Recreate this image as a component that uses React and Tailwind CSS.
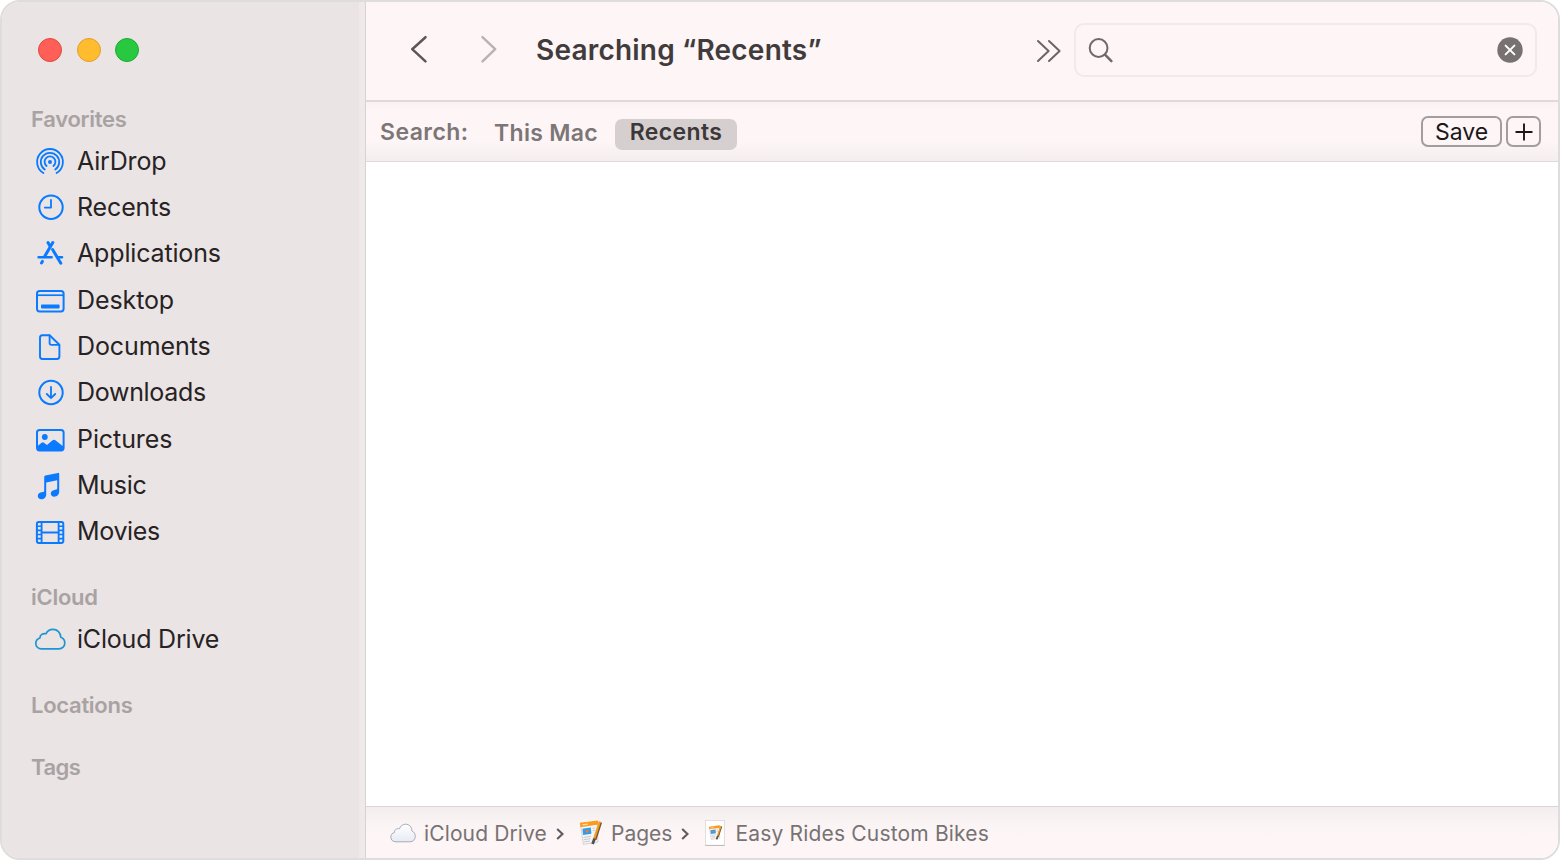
const Svg = ({ children, className = "" }) => (
  <svg viewBox="0 0 32 32" className={"h-8 w-8 shrink-0 " + className} fill="none" stroke="currentColor" strokeWidth="2" strokeLinecap="round" strokeLinejoin="round">
    {children}
  </svg>
);

const AirDropIcon = () => (
  <Svg>
    <g strokeWidth="1.8">
      <path d="M9.4 28A12.9 12.9 0 1 1 22.6 28" />
      <path d="M10.8 24.6A9.2 9.2 0 1 1 21.2 24.6" />
      <path d="M12.6 21A5.4 5.4 0 1 1 19.4 21" />
    </g>
    <circle cx="16" cy="17" r="2" fill="currentColor" stroke="none" />
  </Svg>
);
const RecentsIcon = () => (
  <Svg>
    <circle cx="17" cy="16.3" r="11.7" />
    <path d="M17 8.8V16.6H10.8" strokeWidth="1.8" />
  </Svg>
);
const AppsIcon = () => (
  <Svg>
    <g strokeWidth="3" strokeLinecap="round">
      <path d="M18.8 5.6L10.6 19.6" />
      <path d="M14 5.6L16 8.9" />
      <path d="M18.6 12.6L26.8 26.2" />
      <path d="M8.4 24.4L7.5 25.9" />
      <path d="M4.6 20.3H17.6M24 20.3H28" strokeWidth="2.6" />
    </g>
  </Svg>
);
const DesktopIcon = () => (
  <Svg>
    <rect x="3" y="7" width="26.6" height="20.4" rx="2.6" />
    <path d="M3 11.2H29.5" strokeWidth="1.7" strokeLinecap="butt" />
    <rect x="7" y="20.6" width="18.6" height="3.8" rx="0.8" fill="currentColor" stroke="none" />
  </Svg>
);
const DocumentIcon = () => (
  <Svg>
    <path d="M8.2 5.2H15.6L25.4 14.8V26.6A2.4 2.4 0 0 1 23 29H8.4A2.4 2.4 0 0 1 6 26.6V7.6A2.4 2.4 0 0 1 8.2 5.2Z" strokeWidth="1.9" />
    <path d="M15.6 5.4V13A1.8 1.8 0 0 0 17.4 14.8H25" strokeWidth="1.8" />
  </Svg>
);
const DownloadIcon = () => (
  <Svg>
    <circle cx="17" cy="16.5" r="11.7" />
    <path d="M17 10.8V22M12.8 18L17 22.2L21.2 18" strokeWidth="1.8" />
  </Svg>
);
const PicturesIcon = () => (
  <Svg>
    <rect x="3" y="7" width="26.6" height="20.4" rx="2.6" />
    <circle cx="10.8" cy="14" r="2.9" fill="currentColor" stroke="none" />
    <path d="M3 23.5L7.6 19.8Q9 18.9 10.2 19.9L13 22L18.6 17.2Q20 16.2 21.4 17.2L29.6 23.8V25.4A2 2 0 0 1 27.6 27.4H5A2 2 0 0 1 3 25.4Z" fill="currentColor" stroke="none" />
  </Svg>
);
const MusicIcon = () => (
  <Svg>
    <path d="M10.2 8Q10.2 6.9 11.3 6.6L24 3.9Q25.2 3.7 25.2 4.9V22.8C25.2 25.8 22.9 27.7 20.2 27.7C18.1 27.7 16.8 26.6 16.8 24.6C16.8 22.6 18.2 21.4 20.4 20.9L22.3 20.5Q23.2 20.3 23.2 19.2V11.2L12.2 13.5V25.4C12.2 28.3 10 30.2 7.4 30.2C5.1 30.2 3.8 28.9 3.8 27C3.8 25 5.2 23.8 7.4 23.3L9.2 22.9Q10.2 22.7 10.2 21.6Z" fill="currentColor" stroke="none" />
  </Svg>
);
const MoviesIcon = () => (
  <Svg>
    <rect x="2.9" y="7.1" width="26.4" height="20.8" rx="1.8" />
    <path d="M7.6 7.2V27.8M24.6 7.2V27.8" strokeWidth="1.8" strokeLinecap="butt" />
    <path d="M7.6 17.5H24.6" strokeWidth="1.9" />
    <path d="M3 11.3H7.6M3 15.4H7.6M3 19.5H7.6M3 23.6H7.6M24.6 11.3H29M24.6 15.4H29M24.6 19.5H29M24.6 23.6H29" strokeWidth="1.6" strokeLinecap="butt" />
  </Svg>
);
const CloudIcon = () => (
  <Svg className="text-[#1d96d2]">
    <path d="M7.4 25.9C4 25.9 1.8 23.4 1.8 20.4C1.8 17.8 3.3 15.8 5.9 15C5.9 11.9 9 9.8 11.9 10.8C13.3 8 15.8 6.4 19 6.4C23.4 6.4 26.6 9.6 26.8 14.2C29.2 15.1 30.8 17.3 30.8 20C30.8 23.3 28.3 25.9 24.9 25.9Z" strokeWidth="1.7" />
  </Svg>
);

const favorites = [
  ["AirDrop", AirDropIcon, "tracking-[-0.18px]"],
  ["Recents", RecentsIcon, "tracking-[-0.15px]"],
  ["Applications", AppsIcon, "tracking-[-0.16px]"],
  ["Desktop", DesktopIcon, "tracking-[-0.1px]"],
  ["Documents", DocumentIcon, "tracking-[-0.1px]"],
  ["Downloads", DownloadIcon, "tracking-[-0.3px]"],
  ["Pictures", PicturesIcon, "tracking-[-0.08px]"],
  ["Music", MusicIcon, "tracking-[-0.3px]"],
  ["Movies", MoviesIcon, "tracking-[-0.35px]"],
];

const Row = ({ label, Icon, tracking }) => (
  <li className="flex h-[46.3px] items-center gap-[11px] pl-8 text-[#0a7bff]">
    <Icon />
    <span className={"whitespace-nowrap text-[25px] leading-8 text-[#272223] " + tracking}>{label}</span>
  </li>
);

const Heading = ({ children, className }) => (
  <h2 className={"h-7 pl-[29px] text-[22px] font-semibold leading-7 text-[#a9a2a3] " + className}>{children}</h2>
);

const Sidebar = () => (
  <aside className="w-[364px] shrink-0 border-r border-[#d9d1d3] bg-[#efe9ea] pr-[6px]">
    <div className="h-full bg-[#eae4e4] pt-9">
      <div className="flex h-6 gap-[14.5px] pl-9">
        <span className="h-6 w-6 rounded-full border border-[#e2483f] bg-[#ff5f57]" />
        <span className="h-6 w-6 rounded-full border border-[#e0a02a] bg-[#febc2e]" />
        <span className="h-6 w-6 rounded-full border border-[#1dad2f] bg-[#28c840]" />
      </div>
      <Heading className="mt-[43px] tracking-[-0.28px]">Favorites</Heading>
      <ul className="mt-[4.6px]">
        {favorites.map(([label, Icon, tracking]) => (
          <Row key={label} label={label} Icon={Icon} tracking={tracking} />
        ))}
      </ul>
      <Heading className="mt-[28.7px] tracking-[-0.25px]">iCloud</Heading>
      <ul className="mt-[5.3px]">
        <Row label="iCloud Drive" Icon={CloudIcon} tracking="tracking-[-0.2px]" />
      </ul>
      <Heading className="mt-[28.4px] tracking-[-0.28px]">Locations</Heading>
      <Heading className="mt-[34px] tracking-[-0.5px]">Tags</Heading>
    </div>
  </aside>
);

const PagesArt = () => (
  <>
    <path d="M1.4 4L18 1.6L19 22L4.4 24.4Z" fill="#f4f4f5" stroke="#c6c6c8" strokeWidth="0.7" />
    <path d="M0.8 2.8L19 0.4L19.3 4.6L1.5 7.2Z" fill="#fb9a1d" />
    <path d="M3.4 4.9L9 4.1" stroke="#ffe0b0" strokeWidth="1.2" />
    <path d="M3.4 8.8L11.8 7.6L12.4 13.8L4.1 15Z" fill="#2f9bef" />
    <path d="M5.6 10.4L10.2 9.8L8.4 13.2Z" fill="#ee7a2c" />
    <path d="M13.6 8.4L16 8M13.8 10.6L16 10.3M4.6 17.4L12 16.4M4.8 19.6L11.5 18.7M5.2 21.8L11 21" stroke="#c4c4c6" strokeWidth="0.9" />
    <path d="M21.6 2.2L16 19.6" stroke="#6e5236" strokeWidth="3" />
    <path d="M20.9 1.6L15 19.4" stroke="#f79a1e" strokeWidth="2.2" />
    <path d="M15.6 18.6L13.6 24" stroke="#55504f" strokeWidth="2.8" />
  </>
);

const Chevron = () => (
  <svg viewBox="0 0 8 12" className="mt-0.5 h-3 w-2 shrink-0" fill="none" stroke="#5f5a5b" strokeWidth="2.1">
    <path d="M1.2 1L6.5 6L1.2 11" />
  </svg>
);

const PathBar = () => (
  <footer className="flex h-[52px] shrink-0 items-center border-t border-[#dcd5d6] bg-[linear-gradient(#f4eded,#fbf4f4_35%,#fdf5f6_60%)] pl-6 text-[21px] text-[#777273]">
    <svg viewBox="0 0 26 20" className="h-5 w-[26px] shrink-0">
      <defs>
        <linearGradient id="cloud" x1="0" y1="0" x2="0" y2="1">
          <stop offset="0" stopColor="#ffffff" />
          <stop offset="1" stopColor="#e6ebf3" />
        </linearGradient>
      </defs>
      <path d="M6 18.8C2.8 18.8 0.8 16.8 0.8 14.1C0.8 11.8 2.2 10.1 4.3 9.6C4.3 6.8 6.9 5 9.4 5.8C10.5 3 12.6 1.2 15.6 1.2C19.2 1.2 21.9 4 21.9 7.9C24 8.8 25.3 10.9 25.3 13.3C25.3 16.4 23.2 18.8 20 18.8Z" fill="url(#cloud)" stroke="#a9abb5" strokeWidth="1" />
    </svg>
    <span className="ml-2 mt-0.5 whitespace-nowrap tracking-[0.13px]">iCloud Drive</span>
    <span className="ml-[9px] flex"><Chevron /></span>
    <svg viewBox="0 0 23 26" className="ml-[15px] h-[26px] w-[23px] shrink-0"><PagesArt /></svg>
    <span className="ml-[9px] mt-0.5 whitespace-nowrap">Pages</span>
    <span className="ml-[9px] flex"><Chevron /></span>
    <svg viewBox="0 0 20 26" className="ml-4 h-[26px] w-5 shrink-0">
      <rect x="0.4" y="0.4" width="19.2" height="25.2" fill="#fff" stroke="#dcd6d7" strokeWidth="0.8" />
      <path d="M0.4 25.4H19.6" stroke="#bdb7b8" strokeWidth="1" />
      <g transform="translate(3.4 5) scale(0.6)"><PagesArt /></g>
    </svg>
    <span className="ml-2.5 mt-0.5 whitespace-nowrap tracking-[0.18px]">Easy Rides Custom Bikes</span>
  </footer>
);

const Toolbar = () => (
  <header className="flex h-[100px] shrink-0 items-center border-b-2 border-[#e0d9da] bg-[#fdf5f6] pb-0.5 pr-[21px]">
    <svg viewBox="0 0 20 32" className="ml-[43px] h-8 w-5 -translate-y-px" fill="none" stroke="#5c5657" strokeWidth="2.5" strokeLinecap="round" strokeLinejoin="round">
      <path d="M16.5 4.2L3.2 16.2L16.5 28.4" />
    </svg>
    <svg viewBox="0 0 20 32" className="ml-[50px] h-8 w-5 -translate-y-px" fill="none" stroke="#b9b3b4" strokeWidth="2.5" strokeLinecap="round" strokeLinejoin="round">
      <path d="M3.5 4.2L16.2 16.2L3.5 28.4" />
    </svg>
    <h1 className="ml-[37px] whitespace-nowrap text-[28px] font-semibold tracking-[0.2px] text-[#413b3c]">Searching “Recents”</h1>
    <svg viewBox="0 0 26 24" className="ml-auto mr-3 mt-0.5 h-6 w-[26px]" fill="none" stroke="#6b6566" strokeWidth="2" strokeLinecap="round" strokeLinejoin="round">
      <path d="M2 2L12.6 12L2 22M13 2L23.6 12L13 22" />
    </svg>
    <div className="flex h-[54px] w-[463px] items-center justify-between rounded-[10px] border-2 border-[#f1e9ea] pl-3 pr-3">
      <svg viewBox="0 0 26 26" className="h-[26px] w-[26px]" fill="none" stroke="#6f696a" strokeWidth="2" strokeLinecap="round">
        <circle cx="10.6" cy="11" r="8.9" />
        <path d="M17 17.6L23.4 24.2" strokeWidth="2.5" />
      </svg>
      <svg viewBox="0 0 26 26" className="h-[26px] w-[26px]">
        <circle cx="13" cy="13" r="12.7" fill="#777172" />
        <path d="M8.6 8.6L17.4 17.4M17.4 8.6L8.6 17.4" stroke="#fff" strokeWidth="2" strokeLinecap="round" />
      </svg>
    </div>
  </header>
);

const ScopeBar = () => (
  <div className="flex h-[60px] shrink-0 items-center border-b border-[#e0d8da] bg-[linear-gradient(#f9f1f2,#fef5f6_12%,#fdf5f6_65%,#f5eeee)] pl-3.5 pr-[17px] text-[23px] font-semibold text-[#7c7677]">
    <span className="mt-px whitespace-nowrap tracking-[0.45px]">Search:</span>
    <span className="ml-[25.5px] mt-[3px] whitespace-nowrap tracking-[0.3px]">This Mac</span>
    <span className="ml-[17px] mt-[5px] flex h-[31px] w-[122px] items-center justify-center whitespace-nowrap rounded-[7px] bg-[#d6cfd0] pb-[3px] tracking-[0.4px] text-[#3c3738]">Recents</span>
    <button className="ml-auto flex h-[31px] w-[81px] items-center justify-center rounded-[7px] border-2 border-[#a39d9e] pt-px text-[23px] font-normal text-[#1c1819]">Save</button>
    <button className="ml-1 flex h-[31px] w-[35px] items-center justify-center rounded-[7px] border-2 border-[#a39d9e]">
      <svg viewBox="0 0 18 18" className="h-[18px] w-[18px]" stroke="#1c1819" strokeWidth="1.9">
        <path d="M9 0.5V17.5M0.5 9H17.5" />
      </svg>
    </button>
  </div>
);

export default function App() {
  return (
    <div className="h-[860px] w-[1560px] bg-white font-['Inter',sans-serif]">
      <div className="flex h-full w-full overflow-hidden rounded-[20px] border-2 border-[#dedcdc]">
        <Sidebar />
        <main className="flex min-w-0 flex-1 flex-col bg-white">
          <Toolbar />
          <ScopeBar />
          <div className="flex-1 bg-white" />
          <PathBar />
        </main>
      </div>
    </div>
  );
}
